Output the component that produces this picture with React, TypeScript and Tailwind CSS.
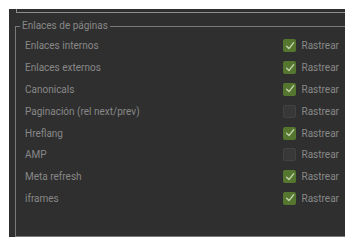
import React from "react";

const rows: { label: string; checked: boolean }[] = [
  { label: "Enlaces internos", checked: true },
  { label: "Enlaces externos", checked: true },
  { label: "Canonicals", checked: true },
  { label: "Paginación (rel next/prev)", checked: false },
  { label: "Hreflang", checked: true },
  { label: "AMP", checked: false },
  { label: "Meta refresh", checked: true },
  { label: "iframes", checked: true },
];

function Box({ checked }: { checked: boolean }) {
  if (checked) {
    return (
      <div className="w-[13px] h-[13px] rounded-[2px] bg-[#55762f] flex items-center justify-center">
        <svg width="10" height="10" viewBox="0 0 10 10">
          <path d="M1.6 5.2 L4 7.6 L8.6 1.8" fill="none" stroke="#bfcfa8" strokeWidth="1.4" strokeLinecap="round" strokeLinejoin="round" />
        </svg>
      </div>
    );
  }
  return <div className="w-[13px] h-[13px] rounded-[2px] bg-[#383838] border border-[#424242]" />;
}

export default function App() {
  return (
    <div className="w-[353px] h-[248px] bg-white pt-[9px] pl-[9px]" style={{ fontFamily: "Roboto, 'Noto Sans', sans-serif" }}>
      <div className="w-[336px] h-[228px] bg-[#2f2f2f] overflow-hidden flex flex-col">
        <div className="ml-[7px] w-[400px] h-[4px] border-l border-b border-[#8e8e8e] shrink-0" />
        <fieldset className="ml-[6px] mt-[7px] w-[400px] h-[300px] border border-[#7a7a7a] pl-[4px]">
          <legend className="px-[2px] text-[10px] leading-[12px] text-[#888888]">Enlaces de páginas</legend>
          <div className="mt-[3px] flex flex-col">
            {rows.map((r) => (
              <div key={r.label} className="h-[21.8px] flex items-center">
                <div className="w-[263px] pl-[5px] text-[10px] text-[#888888]">{r.label}</div>
                <Box checked={r.checked} />
                <div className="ml-[5.5px] text-[10px] text-[#888888]">Rastrear</div>
              </div>
            ))}
          </div>
        </fieldset>
      </div>
    </div>
  );
}
